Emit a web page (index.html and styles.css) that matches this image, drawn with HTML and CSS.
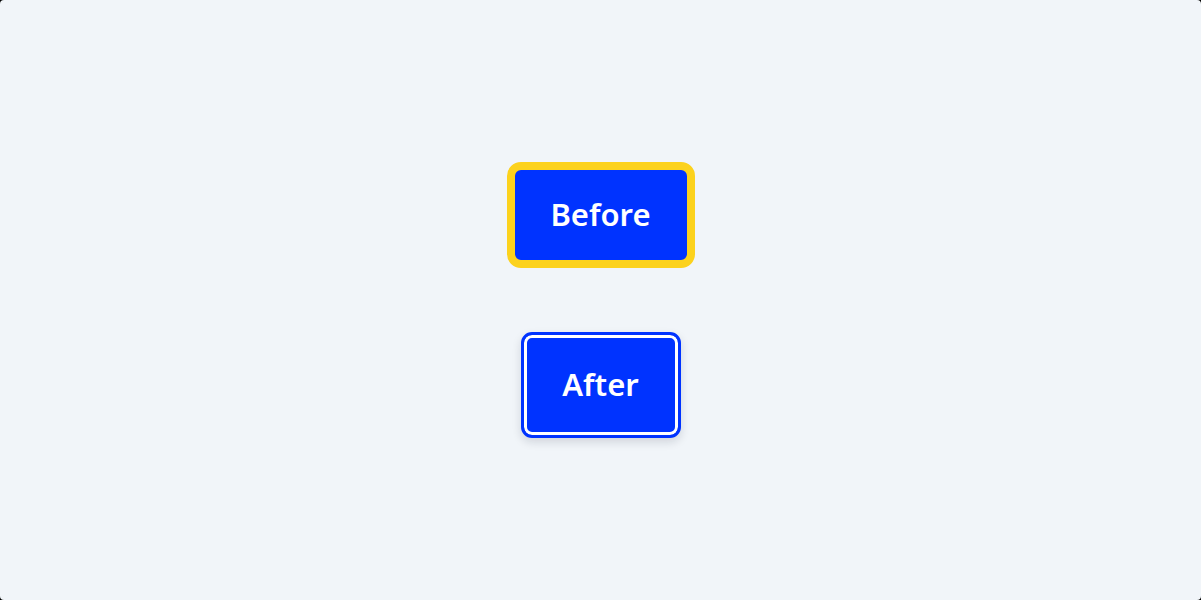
FILE: index.html
```html
<!DOCTYPE html>
<html lang="en">
<head>
<meta charset="utf-8">
<title>Before / After focus ring</title>
<link rel="stylesheet" href="styles.css">
</head>
<body>
<main class="stage">
  <button class="btn btn-before" type="button">Before</button>
  <button class="btn btn-after" type="button">After</button>
</main>
</body>
</html>
```
FILE: styles.css
```css
html {
  background: #000;
}
body {
  margin: 0;
  height: 600px;
  background: #f1f5f9;
  border-radius: 4px;
  overflow: hidden;
  font-family: "Noto Sans", "Open Sans", sans-serif;
}
.stage {
  height: 100%;
  display: flex;
  flex-direction: column;
  align-items: center;
  justify-content: center;
  gap: 64px;
}
.btn {
  box-sizing: border-box;
  display: flex;
  align-items: center;
  justify-content: center;
  margin: 0;
  height: 106px;
  background: #0033ff;
  color: #fff;
  font-family: inherit;
  font-size: 31px;
  font-weight: 600;
  line-height: 40px;
  padding: 0 0 2px;
  cursor: pointer;
}
.btn-before {
  width: 188px;
  border: 8px solid #fcd21d;
  border-radius: 14px;
}
.btn-after {
  width: 160px;
  border: 3px solid #0033ff;
  border-radius: 11px;
  box-shadow: inset 0 0 0 3px #fff, 0 4px 10px rgba(15, 23, 42, 0.14);
}
```
